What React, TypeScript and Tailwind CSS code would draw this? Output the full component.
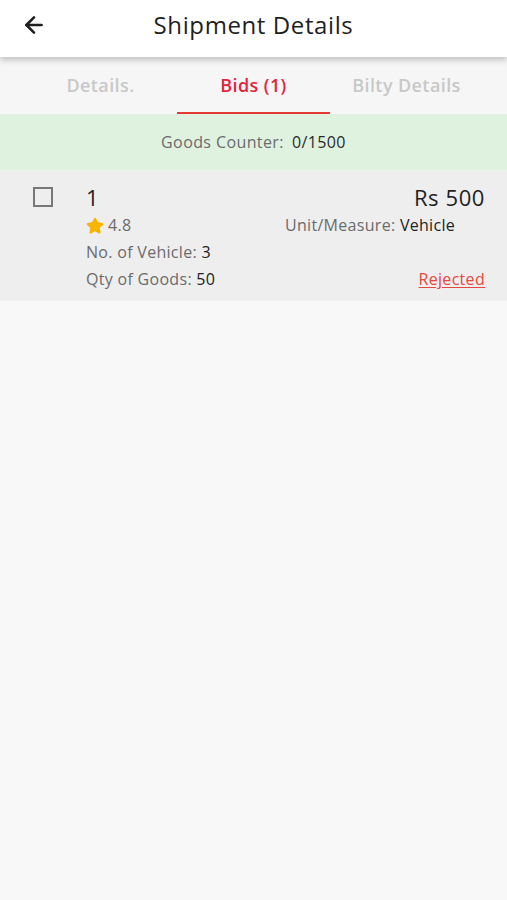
import { ArrowLeft, Star } from "lucide-react"

type Tab = {
    label: string
    active?: boolean
}

const tabs: Tab[] = [
    { label: "Details." },
    { label: "Bids (1)", active: true },
    { label: "Bilty Details" },
]

export default function App() {
    return (
        <div className="min-h-[900px] w-full bg-[#f8f8f8] font-['Open_Sans','Noto_Sans',sans-serif] text-[#1f1f1f]">
            <header className="relative z-10 flex h-[57px] items-center bg-white shadow-[0_3px_6px_rgba(0,0,0,0.22)]">
                <button className="flex w-[68px] items-center justify-center pb-2">
                    <ArrowLeft className="size-[26px]" strokeWidth={2.4} />
                </button>
                <h1 className="flex-1 pr-[68px] pb-2 text-center text-[24px] font-normal tracking-[0.6px]">Shipment Details</h1>
            </header>

            <nav className="flex h-[57px] justify-center bg-[#f6f6f6]">
                {tabs.map(tab => (
                    <div key={tab.label} className={`flex h-full w-[153px] items-center justify-center border-b-2 pt-0.5 text-[18px] font-semibold tracking-[0.4px] ${tab.active ? "border-[#e53935] text-[#e0263e]" : "border-transparent text-[#c8c8c8]"}`}>
                        {tab.label}
                    </div>
                ))}
            </nav>

            <div className="flex h-[56px] items-center justify-center gap-2 bg-[#dff2e0] text-[16px] tracking-[0.4px]">
                <span className="text-[#6b6b6b]">Goods Counter:</span>
                <span className="text-[#2a2a2a]">0/1500</span>
            </div>

            <article className="flex gap-[33px] bg-[#eeeeee] pl-[33px] pr-[22px] pt-[12px] pb-[8px] tracking-[0.3px]">
                <div className="pt-[5px]">
                    <div className="size-[20px] border-2 border-[#777]" />
                </div>
                <div className="flex flex-1 flex-col">
                    <div className="flex items-center justify-between text-[22px] leading-[30px] tracking-[0.6px]">
                        <p>1</p>
                        <p>Rs 500</p>
                    </div>
                    <div className="flex items-center text-[16px] leading-[27px]">
                        <div className="flex w-[199px] items-center gap-1 text-[#6b6b6b]">
                            <Star className="size-[18px] fill-[#f7b500] text-[#f7b500]" />
                            <span>4.8</span>
                        </div>
                        <p className="text-[#6b6b6b]">Unit/Measure: <span className="text-[#222]">Vehicle</span></p>
                    </div>
                    <p className="text-[16px] leading-[27px] text-[#6b6b6b]">No. of Vehicle: <span className="text-[#222]">3</span></p>
                    <div className="flex items-center justify-between text-[16px] leading-[27px]">
                        <p className="text-[#6b6b6b]">Qty of Goods: <span className="text-[#222]">50</span></p>
                        <a href="" className="text-[#e5483f] underline underline-offset-2">Rejected</a>
                    </div>
                </div>
            </article>
        </div>
    )
}
